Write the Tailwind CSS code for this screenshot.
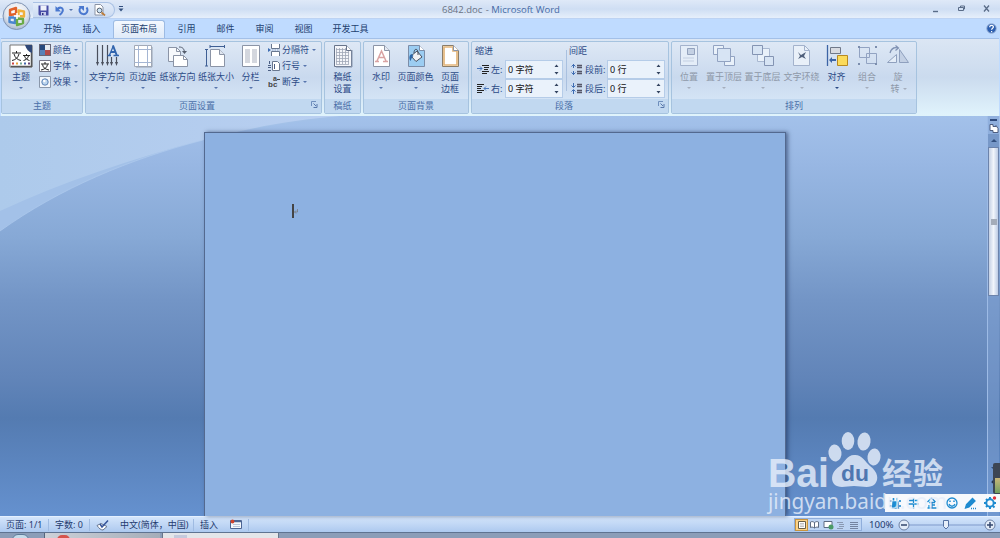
<!DOCTYPE html>
<html lang="zh-CN">
<head>
  <meta charset="UTF-8">
  <title>6842.doc - Microsoft Word</title>
  <script src="https://cdn.jsdelivr.net/npm/@tailwindcss/browser@4"></script>
</head>
<body class="w-[1000px] h-[538px] overflow-hidden relative flex flex-col bg-[#bfdbff] font-['Noto_Sans','Noto_Sans_CJK_SC',sans-serif] text-[9px] leading-[12px] text-[#2b4a86] whitespace-nowrap">

  <!-- 标题栏 -->
  <header class="h-[18px] shrink-0 flex items-center bg-linear-to-b from-[#dfe9f8] via-[#cfdef3] to-[#e6effb]">
    <div class="ml-[33px] w-[82px] h-[16px] mt-[2px] flex items-center border border-[#a9c1e4] border-l-0 rounded-r-full bg-linear-to-b from-[#e3ecf9] to-[#cbdbf2]">
      <svg class="ml-[5px] w-[11px] h-[11px]" viewBox="0 0 11 11"><path d="M.5.5h10v10h-9l-1-1z" fill="#474ca5"/><path d="M2.500.5h6v5h-6z" fill="#eef1fb"/><path d="M3 7h5v3.500H3z" fill="#c5cbe8"/><path d="M4 8h1.500v2H4z" fill="#2c3183"/></svg>
      <svg class="ml-[6px] w-[10px] h-[11px]" viewBox="0 0 10 11"><path d="M2 4.500C5 1 9 3 7.500 6.500 7 8 6 9 4.500 10" fill="none" stroke="#4a78cf" stroke-width="2"/><path d="M.5 1v5.500H6z" fill="#4a78cf"/></svg>
      <span class="ml-[4px] border-x-[2px] border-x-transparent border-t-[2px] border-t-[#5775ad]"></span>
      <svg class="ml-[5px] w-[11px] h-[11px]" viewBox="0 0 11 11"><path d="M8.500 2.500A4 4 0 1 1 3 2" fill="none" stroke="#4a78cf" stroke-width="2"/><path d="M.5 1H6v5z" fill="#4a78cf"/></svg>
      <svg class="ml-[5px] w-[12px] h-[12px]" viewBox="0 0 12 12"><path d="M1 .5h5.500L9 3v8H1z" fill="#fff" stroke="#8a93a5"/><circle cx="5.500" cy="6.500" r="2.400" fill="#cbe3f6" stroke="#56606f"/><path d="M7.500 8.500L11 11.500" stroke="#bb7c3b" stroke-width="1.700"/></svg>
    </div>
    <svg class="ml-[3px] w-[6px] h-[6px]" viewBox="0 0 6 6"><path d="M1 .5h4" stroke="#33507f"/><path d="M.5 2.500h5L3 5.500z" fill="#33507f"/></svg>
    <h1 class="ml-[318px] mt-[2px] w-[120px] font-['Open_Sans'] text-[9.500px] text-[#6a7283]">6842.doc <span class="ml-[1px]">-</span> <span class="text-[#456aa5]">Microsoft Word</span></h1>
    <svg class="ml-[370px] w-[60px] h-[10px]" viewBox="0 0 60 10" fill="none" stroke="#5a6c88"><path d="M1 7.500h5" stroke-width="1.400"/><path d="M26.500 3.500h5v3h-5zM28.500 3v-1h4V5h-1"/><path d="M52 1.500l5 6M57 1.500l-5 6" stroke-width="1.300"/></svg>
  </header>

  <!-- 选项卡 -->
  <nav class="h-[20px] shrink-0 pl-[33px] flex items-end text-center border-t border-[#bdd3f3] bg-[#bfdbff] text-[#22406f]">
    <a class="w-[39px] h-[18px] pt-[3px]">开始</a>
    <a class="w-[39px] h-[18px] pt-[3px]">插入</a>
    <a class="mx-[2px] w-[52px] h-[18px] pt-[2px] border border-b-0 border-[#9dbbe3] rounded-t-[3px] bg-linear-to-b from-[#f4f9ff] to-[#dfeaf8]">页面布局</a>
    <a class="w-[39px] h-[18px] pt-[3px]">引用</a>
    <a class="w-[39px] h-[18px] pt-[3px]">邮件</a>
    <a class="w-[39px] h-[18px] pt-[3px]">审阅</a>
    <a class="w-[39px] h-[18px] pt-[3px]">视图</a>
    <a class="w-[55px] h-[18px] pt-[3px]">开发工具</a>
    <svg class="ml-auto mr-[3px] mb-[4px] w-[11px] h-[11px]" viewBox="0 0 11 11"><circle cx="5.500" cy="5.500" r="4.800" fill="#2d5fb0" stroke="#9db5da"/><path d="M3.700 4.200c0-2.500 3.700-2.300 3.700-.2 0 1.200-1.800 1.300-1.800 2.700M5.600 8v1.200" fill="none" stroke="#fff" stroke-width="1.200"/></svg>
  </nav>

  <!-- 功能区 -->
  <section class="h-[78px] shrink-0 mx-[1px] pt-[2px] pb-[1px] flex border-t border-[#a3c0e8] border-b border-b-[#dff3fb] bg-linear-to-b from-[#dbe6f4] via-[#cbdbee] to-[#e0f3fc]">

    <!-- 主题 -->
    <div class="w-[82px] mr-[2px] flex flex-col border border-[#a6c3df] rounded-[2px] bg-linear-to-b from-[#dee8f5] via-[#c9d9ee] to-[#dbebfa]">
      <div class="h-[58px] flex">
        <div class="ml-[2px] w-[34px] flex flex-col items-center">
          <svg class="mt-[2px] w-[24px] h-[24px]" viewBox="0 0 24 24"><path d="M1 1h22v22H1z" fill="#fff" stroke="#777"/><path d="M2 22.500h21M22.500 2v21" stroke="#555" stroke-width="1.500"/><path d="M16 1h7v8c-3-1-6-4-7-8z" fill="#2f4777"/><path d="M3 9h9M7.500 7v2M5 10c1 4 4 6 7 6.500M10 10c-1 4-4 6-7 6.500M14 11.500h7M17.500 10v1.500M15.500 12c1 3 3 4 5 4.500M19.500 12c-1 3-3 4-5 4.500" fill="none" stroke="#222"/><path d="M3 19.500h2" stroke="#c44" stroke-width="2"/><path d="M7 19.500h2" stroke="#e8a33c" stroke-width="2"/><path d="M11 19.500h2" stroke="#7a9" stroke-width="2"/><path d="M15 19.500h2" stroke="#46a" stroke-width="2"/><path d="M19 19.500h2" stroke="#647" stroke-width="2"/></svg>
          <span class="mt-[3px]">主题</span>
          <span class="mt-[4px] border-x-[2px] border-x-transparent border-t-[2px] border-t-[#5775ad]"></span>
        </div>
        <div class="ml-[1px] pt-[2px] flex flex-col gap-[4px]">
          <div class="flex items-center gap-[2px]">
            <svg class="w-[12px] h-[12px]" viewBox="0 0 12 12"><path d="M0 0h12v12H0z" fill="#667"/><path d="M1 1h5v5H1z" fill="#27497d"/><path d="M6 1h5v5H6z" fill="#e6eaf0"/><path d="M1 6h5v5H1z" fill="#5781b9"/><path d="M6 6h5v5H6z" fill="#b14a4c"/></svg>
            颜色 <span class="ml-[1px] border-x-[2px] border-x-transparent border-t-[2px] border-t-[#5775ad]"></span>
          </div>
          <div class="flex items-center gap-[2px]">
            <svg class="w-[12px] h-[12px]" viewBox="0 0 12 12"><path d="M.5.5h11v11H.5z" fill="#fff" stroke="#778"/><path d="M2 4h8M6 2v2M3.500 4.500C4 8 7 9.500 10 10M8.500 4.500C8 8 5 9.500 2 10" fill="none" stroke="#222"/></svg>
            字体 <span class="ml-[1px] border-x-[2px] border-x-transparent border-t-[2px] border-t-[#5775ad]"></span>
          </div>
          <div class="flex items-center gap-[2px]">
            <svg class="w-[12px] h-[12px]" viewBox="0 0 12 12"><path d="M.5.5h11v11H.5z" fill="#f4f7fb" stroke="#8a97aa"/><circle cx="6" cy="6" r="3.200" fill="#bdd6ee" stroke="#5d82b5"/><circle cx="5.300" cy="5" r="1.200" fill="#fff"/></svg>
            效果 <span class="ml-[1px] border-x-[2px] border-x-transparent border-t-[2px] border-t-[#5775ad]"></span>
          </div>
        </div>
      </div>
      <div class="flex-1 text-center leading-[14px] bg-[#c1d8f0] text-[#4a6fa8]">主题</div>
    </div>

    <!-- 页面设置 -->
    <div class="w-[237px] mr-[2px] flex flex-col border border-[#a6c3df] rounded-[2px] bg-linear-to-b from-[#dee8f5] via-[#c9d9ee] to-[#dbebfa]">
      <div class="h-[58px] flex">
        <div class="ml-[2px] w-[38px] flex flex-col items-center">
          <svg class="mt-[2px] w-[24px] h-[24px]" viewBox="0 0 24 24"><path d="M2.500 1v18M7.500 1v18M12.500 1v18M16.500 13v6M21.500 13v6" stroke="#4a4f5c" stroke-width="1.200"/><path d="M1 18h3l-1.500 4zM6 18h3l-1.500 4zM11 18h3l-1.500 4zM15 18h3l-1.500 4zM20 18h3l-1.500 4z" fill="#4a4f5c"/><path d="M12.500 11.500h3.500M18.500 11.500h5.500M14.500 11L18.500 1.500" fill="none" stroke="#3265ad" stroke-width="1.300"/><path d="M18 1.500L21.800 11.500M16 8h4.500" fill="none" stroke="#3265ad" stroke-width="2"/></svg>
          <span class="mt-[3px]">文字方向</span>
          <span class="mt-[4px] border-x-[2px] border-x-transparent border-t-[2px] border-t-[#5775ad]"></span>
        </div>
        <div class="w-[33px] flex flex-col items-center">
          <svg class="mt-[2px] w-[24px] h-[24px]" viewBox="0 0 24 24"><path d="M3.500 1.500h17v21h-17z" fill="#fff" stroke="#a2a9b6"/><path d="M7.500 1.500v21M16.500 1.500v21M3.500 5.500h17M3.500 18.500h17" stroke="#a5b6d3"/><path d="M21 3v20H5" fill="none" stroke="#9aa3b2"/></svg>
          <span class="mt-[3px]">页边距</span>
          <span class="mt-[4px] border-x-[2px] border-x-transparent border-t-[2px] border-t-[#5775ad]"></span>
        </div>
        <div class="w-[37px] flex flex-col items-center">
          <svg class="mt-[2px] w-[24px] h-[24px]" viewBox="0 0 24 24"><path d="M2.500 3.500h8l4 4v10h-12z" fill="#f7f9fc" stroke="#8b94a6"/><path d="M7.500 11.500h10l4 4v7h-14z" fill="#fff" stroke="#8b94a6"/><path d="M10.500 3.500v4h4M17.500 11.500v4h4" fill="none" stroke="#8b94a6"/><path d="M13 3c4 0 5 2 5.500 5" fill="none" stroke="#555d6d"/><path d="M16 7h5L18.500 10z" fill="#555d6d"/></svg>
          <span class="mt-[3px]">纸张方向</span>
          <span class="mt-[4px] border-x-[2px] border-x-transparent border-t-[2px] border-t-[#5775ad]"></span>
        </div>
        <div class="w-[40px] flex flex-col items-center">
          <svg class="mt-[2px] w-[24px] h-[24px]" viewBox="0 0 24 24"><path d="M6.500 5.500h9l5 5v12h-14z" fill="#fff" stroke="#8b94a6"/><path d="M15.500 5.500v5h5" fill="#dfe5ef" stroke="#8b94a6"/><path d="M6 2.500h14M6 1v3M20.500 1v3M2.500 5v17M1 5.500h3M1 22h3" stroke="#3f5f94"/></svg>
          <span class="mt-[3px]">纸张大小</span>
          <span class="mt-[4px] border-x-[2px] border-x-transparent border-t-[2px] border-t-[#5775ad]"></span>
        </div>
        <div class="w-[29px] flex flex-col items-center">
          <svg class="mt-[2px] w-[24px] h-[24px]" viewBox="0 0 24 24"><path d="M3.500 1.500h17v21h-17z" fill="#fff" stroke="#8b94a6"/><path d="M6 6h5M6 8h5M6 10h5M6 12h5M6 14h5M6 16h5M6 18h5M13 6h5M13 8h5M13 10h5M13 12h5M13 14h5M13 16h5M13 18h5" stroke="#a9b0bd" stroke-width="1.200"/></svg>
          <span class="mt-[3px]">分栏</span>
          <span class="mt-[4px] border-x-[2px] border-x-transparent border-t-[2px] border-t-[#5775ad]"></span>
        </div>
        <div class="ml-[3px] pt-[2px] flex flex-col gap-[4px]">
          <div class="flex items-center gap-[2px]">
            <svg class="w-[12px] h-[12px]" viewBox="0 0 12 12"><path d="M3.500 0v4.500h8V0M3.500 12V7.500h8V12" fill="#fff" stroke="#68778f"/><path d="M4 6h8" stroke="#8ca2c5" stroke-dasharray="1.500 1"/><path d="M0 4l3 2-3 2z" fill="#3f6db3"/></svg>
            分隔符 <span class="ml-[1px] border-x-[2px] border-x-transparent border-t-[2px] border-t-[#5775ad]"></span>
          </div>
          <div class="flex items-center gap-[2px]">
            <svg class="w-[12px] h-[12px]" viewBox="0 0 12 12"><path d="M4.500 1.500h5l2 2v7h-7z" fill="#fff" stroke="#68778f"/><path d="M1.500 1v3M0 5.500h3M0 7.500h3M0 10.500h3M6.500 4v5" stroke="#4a5e83"/></svg>
            行号 <span class="ml-[1px] border-x-[2px] border-x-transparent border-t-[2px] border-t-[#5775ad]"></span>
          </div>
          <div class="flex items-center gap-[2px]">
            <svg class="w-[12px] h-[12px]" viewBox="0 0 12 12"><g fill="#444" font-family="Liberation Sans" font-weight="bold"><text x="0" y="11" font-size="8">bc</text><text x="5" y="5" font-size="7">a</text></g><path d="M9 3.500h3" stroke="#444"/></svg>
            断字 <span class="ml-[1px] border-x-[2px] border-x-transparent border-t-[2px] border-t-[#5775ad]"></span>
          </div>
        </div>
      </div>
      <div class="flex-1 flex leading-[14px] bg-[#c1d8f0] text-[#4a6fa8]">
        <span class="ml-[93px]">页面设置</span>
        <svg class="ml-auto mr-[3px] mt-[2px] w-[7px] h-[7px]" viewBox="0 0 7 7"><path d="M.5 5V.5H5" fill="none" stroke="#6f8fbd"/><path d="M2.500 2.500L5 5M6 3v3.500H2.500" fill="none" stroke="#5878ab"/></svg>
      </div>
    </div>

    <!-- 稿纸 -->
    <div class="w-[37px] mr-[2px] flex flex-col border border-[#a6c3df] rounded-[2px] bg-linear-to-b from-[#dee8f5] via-[#c9d9ee] to-[#dbebfa]">
      <div class="h-[58px] flex flex-col items-center">
        <svg class="mt-[2px] w-[24px] h-[24px]" viewBox="0 0 24 24"><path d="M3.500 1.500h12l5 5v16h-17z" fill="#f5f6fa" stroke="#68748a"/><path d="M21 6v17H5" fill="none" stroke="#8593ab"/><path d="M5.500 4v16M8.500 4v16M11.500 4v16M14.500 4v16M17.500 7v13M5 5.500h10M5 8.500h13M5 11.500h13M5 14.500h13M5 17.500h13M5 20.500h13" stroke="#a0a7b6" stroke-width=".8"/><path d="M15.500 1.500v5h5" fill="#fff" stroke="#68748a"/></svg>
        <span class="mt-[3px]">稿纸</span>
        <span>设置</span>
      </div>
      <div class="flex-1 text-center leading-[14px] bg-[#c1d8f0] text-[#4a6fa8]">稿纸</div>
    </div>

    <!-- 页面背景 -->
    <div class="w-[106px] mr-[2px] flex flex-col border border-[#a6c3df] rounded-[2px] bg-linear-to-b from-[#dee8f5] via-[#c9d9ee] to-[#dbebfa]">
      <div class="h-[58px] flex">
        <div class="ml-[1px] w-[32px] flex flex-col items-center">
          <svg class="mt-[2px] w-[24px] h-[24px]" viewBox="0 0 24 24"><path d="M4.500 1.500h11l5 5v16h-16z" fill="#fff" stroke="#8b94a6"/><path d="M15.500 1.500v5h5" fill="#e5e9f2" stroke="#8b94a6"/><path d="M6 17.500h4M14 17.500h5M8 17L12.500 7 17 17M9.500 13.500h6" fill="none" stroke="#d9a3a3" stroke-width="1.500"/></svg>
          <span class="mt-[3px]">水印</span>
          <span class="mt-[4px] border-x-[2px] border-x-transparent border-t-[2px] border-t-[#5775ad]"></span>
        </div>
        <div class="w-[37px] flex flex-col items-center">
          <svg class="mt-[2px] w-[24px] h-[24px]" viewBox="0 0 24 24"><path d="M4.500 1.500h11l5 5v16h-16z" fill="#9ccdf2" stroke="#7c8da8"/><path d="M15.500 1.500v5h5" fill="#fff" stroke="#7c8da8"/><path d="M7 12l6-5 5 6-6 4.500z" fill="#f0f2f5" stroke="#454f60"/><path d="M10 9c0-5 4-5 4 0v2" fill="none" stroke="#454f60"/><path d="M7.500 10c-2 1-3 4-1 7 1-2 1-4 3-5z" fill="#2b66a8"/></svg>
          <span class="mt-[3px]">页面颜色</span>
          <span class="mt-[4px] border-x-[2px] border-x-transparent border-t-[2px] border-t-[#5775ad]"></span>
        </div>
        <div class="w-[32px] flex flex-col items-center">
          <svg class="mt-[2px] w-[24px] h-[24px]" viewBox="0 0 24 24"><path d="M4.500 1.500h11l5 5v16h-16z" fill="#fff" stroke="#8b7d68"/><path d="M6 3h9v4h4v14H6z" fill="none" stroke="#e3b579" stroke-width="1.700"/><path d="M15.500 1.500v5h5" fill="#fff" stroke="#8b94a6"/></svg>
          <span class="mt-[3px]">页面</span>
          <span>边框</span>
        </div>
      </div>
      <div class="flex-1 text-center leading-[14px] bg-[#c1d8f0] text-[#4a6fa8]">页面背景</div>
    </div>

    <!-- 段落 -->
    <div class="w-[198px] mr-[2px] flex flex-col border border-[#a6c3df] rounded-[2px] bg-linear-to-b from-[#dee8f5] via-[#c9d9ee] to-[#dbebfa]">
      <div class="h-[58px] flex">
        <div class="ml-[3px] w-[91px] pt-[3px] flex flex-col">
          <span>缩进</span>
          <div class="mt-[3px] h-[19px] flex items-center">
            <svg class="ml-[2px] w-[12px] h-[11px]" viewBox="0 0 12 11"><path d="M5 1.500h7M7 3.500h5M7 5.500h4M5 7.500h7M5 9.500h5" stroke="#222"/><path d="M0 4.500h5M3 2.500l2 2-2 2" fill="none" stroke="#4a78bd"/></svg>
            <span class="ml-[2px] w-[14px]">左:</span>
            <div class="w-[58px] h-[19px] pl-[2px] pr-[3px] flex items-center justify-between border border-[#b5cce8] bg-[#eaf2fb] text-[#111]">0 字符
              <svg class="w-[5px] h-[11px]" viewBox="0 0 5 11"><path d="M.5 3h4l-2-2.500zM.5 8h4l-2 2.500z" fill="#33435f"/></svg>
            </div>
          </div>
          <div class="h-[19px] flex items-center">
            <svg class="ml-[2px] w-[12px] h-[11px]" viewBox="0 0 12 11"><path d="M0 1.500h7M0 3.500h5M0 5.500h4M0 7.500h7M0 9.500h5" stroke="#222"/><path d="M12 5.500H7M9 3.500l-2 2 2 2" fill="none" stroke="#4a78bd"/></svg>
            <span class="ml-[2px] w-[14px]">右:</span>
            <div class="w-[58px] h-[19px] pl-[2px] pr-[3px] flex items-center justify-between border border-[#b5cce8] bg-[#eaf2fb] text-[#111]">0 字符
              <svg class="w-[5px] h-[11px]" viewBox="0 0 5 11"><path d="M.5 3h4l-2-2.500zM.5 8h4l-2 2.500z" fill="#33435f"/></svg>
            </div>
          </div>
        </div>
        <div class="mt-[8px] h-[41px] border-l border-[#a9c0df]"></div>
        <div class="ml-[1px] w-[98px] pt-[3px] flex flex-col">
          <span class="ml-[1px]">间距</span>
          <div class="mt-[3px] h-[19px] flex items-center">
            <svg class="ml-[3px] w-[12px] h-[11px]" viewBox="0 0 12 11"><path d="M6 1.500h5M6 3.500h5M6 7.500h5M6 9.500h5" stroke="#556" stroke-width="1.500"/><path d="M2.500 0v4M2.500 7v4M.5 2.500l2-2 2 2M.5 8.500l2 2 2-2" fill="none" stroke="#3f6db3"/></svg>
            <span class="ml-[2px] w-[22px]">段前:</span>
            <div class="w-[58px] h-[19px] px-[2px] flex items-center justify-between border border-[#b5cce8] bg-[#eaf2fb] text-[#111]">0 行
              <svg class="mr-[1px] w-[5px] h-[11px]" viewBox="0 0 5 11"><path d="M.5 3h4l-2-2.500zM.5 8h4l-2 2.500z" fill="#33435f"/></svg>
            </div>
          </div>
          <div class="h-[19px] flex items-center">
            <svg class="ml-[3px] w-[12px] h-[11px]" viewBox="0 0 12 11"><path d="M6 1.500h5M6 3.500h5M6 7.500h5M6 9.500h5" stroke="#556" stroke-width="1.500"/><path d="M2.500 0v4M2.500 7v4M.5 2.500l2 2 2-2M.5 8.500l2-2 2 2" fill="none" stroke="#3f6db3"/></svg>
            <span class="ml-[2px] w-[22px]">段后:</span>
            <div class="w-[58px] h-[19px] px-[2px] flex items-center justify-between border border-[#b5cce8] bg-[#eaf2fb] text-[#111]">0 行
              <svg class="mr-[1px] w-[5px] h-[11px]" viewBox="0 0 5 11"><path d="M.5 3h4l-2-2.500zM.5 8h4l-2 2.500z" fill="#33435f"/></svg>
            </div>
          </div>
        </div>
      </div>
      <div class="flex-1 flex leading-[14px] bg-[#c1d8f0] text-[#4a6fa8]">
        <span class="ml-[83px]">段落</span>
        <svg class="ml-auto mr-[3px] mt-[2px] w-[7px] h-[7px]" viewBox="0 0 7 7"><path d="M.5 5V.5H5" fill="none" stroke="#6f8fbd"/><path d="M2.500 2.500L5 5M6 3v3.500H2.500" fill="none" stroke="#5878ab"/></svg>
      </div>
    </div>

    <!-- 排列 -->
    <div class="w-[246px] flex flex-col border border-[#a6c3df] rounded-[2px] bg-linear-to-b from-[#dee8f5] via-[#c9d9ee] to-[#dbebfa]">
      <div class="h-[58px] flex text-[#8e98a8]">
        <div class="w-[34px] flex flex-col items-center">
          <svg class="mt-[2px] w-[24px] h-[24px]" viewBox="0 0 24 24"><path d="M3.500 1.500h17v20h-17z" fill="#e4edf8" stroke="#a3b2cc"/><path d="M10.500 4.500h7v6h-7z" fill="#c4d1e4" stroke="#93a2bd"/><path d="M11 10l3-3 3 3M6 14h11M6 17h11" fill="none" stroke="#c3cfe2"/></svg>
          <span class="mt-[3px]">位置</span>
          <span class="mt-[4px] border-x-[2px] border-x-transparent border-t-[2px] border-t-[#a5aebd]"></span>
        </div>
        <div class="w-[36px] flex flex-col items-center">
          <svg class="mt-[2px] w-[24px] h-[24px]" viewBox="0 0 24 24"><path d="M1.500 1.500h10v9h-10zM12.500 12.500h10v9h-10z" fill="#e9f1fa" stroke="#92a3c2"/><path d="M5.500 4.500h13v13h-13z" fill="#d7e4f4" stroke="#92a3c2"/></svg>
          <span class="mt-[3px]">置于顶层</span>
          <span class="mt-[4px] border-x-[2px] border-x-transparent border-t-[2px] border-t-[#a5aebd]"></span>
        </div>
        <div class="w-[41px] flex flex-col items-center">
          <svg class="mt-[2px] w-[24px] h-[24px]" viewBox="0 0 24 24"><path d="M6.500 4.500h12v13h-12z" fill="#e9f1fa" stroke="#a9b8d1"/><path d="M1.500 1.500h10v9h-10zM13.500 12.500h9v9h-9z" fill="#d7e4f4" stroke="#8494b3"/></svg>
          <span class="mt-[3px]">置于底层</span>
          <span class="mt-[4px] border-x-[2px] border-x-transparent border-t-[2px] border-t-[#a5aebd]"></span>
        </div>
        <div class="w-[37px] flex flex-col items-center">
          <svg class="mt-[2px] w-[24px] h-[24px]" viewBox="0 0 24 24"><path d="M3.500 1.500h11l5 5v15h-16z" fill="#e9f0f9" stroke="#a3b2cc"/><path d="M14.500 1.500v5h5" fill="none" stroke="#a3b2cc"/><path d="M8 8l3 3 5-3-2 4 2 3-4-2-4 2 2-3z" fill="#50607c"/></svg>
          <span class="mt-[3px]">文字环绕</span>
          <span class="mt-[4px] border-x-[2px] border-x-transparent border-t-[2px] border-t-[#a5aebd]"></span>
        </div>
        <div class="w-[33px] flex flex-col items-center text-[#2b4a86]">
          <svg class="mt-[2px] w-[24px] h-[24px]" viewBox="0 0 24 24"><path d="M2.500 1v21" stroke="#3c64a5" stroke-width="1.300"/><path d="M5.500 3.500h10v6h-10z" fill="#d8dbe2" stroke="#707889"/><path d="M12.500 11.500h10v10h-10z" fill="#fbdb5b" stroke="#b78a22"/><path d="M4 16l3-3v2h4v2H7v2z" fill="#3c64a5"/></svg>
          <span class="mt-[3px]">对齐</span>
          <span class="mt-[4px] border-x-[2px] border-x-transparent border-t-[2px] border-t-[#2b4a86]"></span>
        </div>
        <div class="w-[28px] flex flex-col items-center">
          <svg class="mt-[2px] w-[24px] h-[24px]" viewBox="0 0 24 24"><path d="M4.500 3.500h10v10h-10zM11.500 9.500h10v10h-10z" fill="none" stroke="#92a3c2"/><path d="M3 2h2v2H3zM20 2h2v2h-2zM3 19h2v2H3zM20 19h2v2h-2z" fill="#7b8dad"/></svg>
          <span class="mt-[3px]">组合</span>
          <span class="mt-[4px] border-x-[2px] border-x-transparent border-t-[2px] border-t-[#a5aebd]"></span>
        </div>
        <div class="w-[34px] flex flex-col items-center">
          <svg class="mt-[2px] w-[24px] h-[24px]" viewBox="0 0 24 24"><path d="M1.500 18.500h9v-8z" fill="#e4edf8" stroke="#8fa0be"/><path d="M13.500 5.500v13h9z" fill="#c3d0e4" stroke="#8fa0be"/><path d="M4 9c1-4 4-6 8-5M9.500 1.500l3 2.500-3 2.500" fill="none" stroke="#7f91b3" stroke-width="1.200"/></svg>
          <span class="mt-[3px]">旋</span>
          <span class="mr-[6px] flex items-center gap-[3px]">转<span class="mr-[-7px] border-x-[2px] border-x-transparent border-t-[2px] border-t-[#a5aebd]"></span></span>
        </div>
      </div>
      <div class="flex-1 text-center leading-[14px] bg-[#c1d8f0] text-[#4a6fa8]">排列</div>
    </div>
  </section>

  <!-- 文档区 -->
  <main class="h-[400px] shrink-0 relative flex">
    <svg class="absolute inset-0 w-[1000px] h-[400px]" viewBox="0 0 1000 400">
      <defs>
        <linearGradient id="sky" x1="0" y1="0" x2="0" y2="1">
          <stop offset="0" stop-color="#a3c1ea"/><stop offset=".12" stop-color="#98b7e3"/><stop offset=".3" stop-color="#87a9d6"/><stop offset=".46" stop-color="#7395c6"/><stop offset=".65" stop-color="#6285b9"/><stop offset=".755" stop-color="#547bb1"/><stop offset="1" stop-color="#6591cf"/>
        </linearGradient>
        <linearGradient id="glow" x1="0" y1="0" x2="1" y2="0">
          <stop offset="0" stop-color="#adcaeb"/><stop offset="1" stop-color="#b9cff1"/>
        </linearGradient>
      </defs>
      <path d="M0 0h1000v400H0z" fill="url(#sky)"/>
      <path d="M0 115C60 72 130 43 203 24 250 12 290 6 330 3V0H0z" fill="#a3c1e8"/>
      <path d="M0 95C60 67 130 43 203 24 250 12 290 4 340 0H0z" fill="url(#glow)"/>
      <path d="M0 115C60 72 130 43 203 24" fill="none" stroke="#b0cbee" stroke-width=".7"/>
    </svg>
    <!-- 页面 -->
    <div class="relative ml-[204px] mt-[16px] w-[582px] border border-b-0 border-[#53698f] bg-[#8db1e1] shadow-[2px_0_4px_rgba(30,50,90,0.6)]">
      <div class="ml-[87px] mt-[71px] flex items-center">
        <span class="w-[2px] h-[14px] bg-[#444]"></span>
        <svg class="w-[4px] h-[5px]" viewBox="0 0 4 5"><path d="M3.500 0v3H.5M2 1.500L.5 3 2 4.500" fill="none" stroke="#777" stroke-width=".7"/></svg>
      </div>
    </div>
    <!-- 滚动条 -->
    <div class="relative ml-auto mr-[1px] w-[12px] flex flex-col items-center border-l border-[#9dbbe6] bg-[#7d9fd2]/50">
      <span class="mt-[3px] w-[7px] h-[2px] bg-[#2f4a7c]"></span>
      <svg class="mt-[2px] w-[10px] h-[11px]" viewBox="0 0 10 11"><path d="M1 1.500h3v2h3v-1l2 3v4H4v-2H1z" fill="#fff" stroke="#4f5f80"/></svg>
      <div class="w-full h-[13px] flex justify-center items-center bg-[#7798c8]"><span class="border-x-[3px] border-x-transparent border-b-[3px] border-b-[#33507f]"></span></div>
      <div class="w-[11px] h-[149px] flex items-center justify-center border border-[#6c83ab] bg-linear-to-r from-[#c4d0e4] via-[#f1f5fb] to-[#bccbe4]"><span class="w-[6px] h-[6px] bg-[#a4acb9]"></span></div>
      <span class="mt-[171px] border-x-[3px] border-x-transparent border-t-[3px] border-t-[#33507f]"></span>
      <span class="mt-[10px] w-[4px] h-[4px] border-t-2 border-l-2 border-[#223354] rotate-45"></span>
    </div>
  </main>

  <!-- 状态栏 -->
  <footer class="h-[16px] shrink-0 flex items-center border-t border-[#e4f0ff] bg-linear-to-b from-[#d4e5fb] to-[#adc9ef] text-[#1f3a6e]">
    <span class="w-[49px] h-[12px] pl-[6px] border-r border-[#9fbbe2]">页面: 1/1</span>
    <span class="w-[41px] h-[12px] pl-[6px] border-r border-[#9fbbe2]">字数: 0</span>
    <svg class="ml-[6px] w-[13px] h-[12px]" viewBox="0 0 13 12"><path d="M1 6.500l4-2 6 3-4 3.500c-2 0-4-1.500-6-4.500z" fill="#fff" stroke="#65748f"/><path d="M4 5l2 3 6-6.500" fill="none" stroke="#35549a" stroke-width="1.500"/></svg>
    <span class="ml-[5px] w-[80px] h-[12px] pl-[6px] border-r border-[#9fbbe2]">中文(简体，中国)</span>
    <span class="ml-[6px]">插入</span>
    <svg class="ml-[12px] w-[12px] h-[11px]" viewBox="0 0 12 11"><path d="M.5 1.500h11v8H.5z" fill="#f4f7fb" stroke="#4c6493"/><path d="M1 2.500h10" stroke="#4c6493" stroke-width="1.500"/><path d="M3 5.500h7M3 7.500h7" stroke="#b9c5d9"/><circle cx="2.500" cy="2.500" r="1.900" fill="#d0452e"/></svg>
    <span class="ml-[6px] h-[12px] border-r border-[#9fbbe2]"></span>
    <div class="ml-auto h-[13px] mr-[7px] flex items-center border border-[#90aedb] bg-[#bdd4f3]">
      <span class="w-[13px] h-[12px] flex items-center justify-center border border-[#c8943e] bg-[#fcd389]"><svg class="w-[8px] h-[8px]" viewBox="0 0 8 8"><path d="M.5.5h7v7h-7z" fill="#fff" stroke="#6b6047"/><path d="M2 2.500h4M2 4h4M2 5.500h4" stroke="#999" stroke-width=".6"/></svg></span>
      <svg class="w-[53px] h-[10px]" viewBox="0 0 53 10"><path d="M2.500 2c2-1 3 0 4 .5 1-.5 2-1.500 4-.5v5.500c-2-1-3 0-4 .5-1-.5-2-1.500-4-.5zM6.500 2.500V8" fill="#fff" stroke="#5d6b82"/><path d="M16 1.500h8v6h-8z" fill="#fff" stroke="#5d6b82"/><circle cx="23" cy="7" r="2.500" fill="#4a9a66"/><path d="M29 2.500h6M31 4.500h5M31 6.500h5M29 8.500h6" stroke="#8a99b2"/><path d="M42 2.500h8M42 4.500h8M42 6.500h8M42 8.500h8" stroke="#7383a0"/></svg>
    </div>
    <span class="w-[25px] text-[9.700px]">100%</span>
    <svg class="ml-[4px] mr-[2px] w-[100px] h-[14px]" viewBox="0 0 100 14"><path d="M11 7h76" stroke="#7e9acb"/><path d="M45.500 2.500h5v6L48 11l-2.500-2.500z" fill="#e6eef9" stroke="#5672a3"/><circle cx="6" cy="7" r="5" fill="#e3ecf8" stroke="#6c80a3"/><path d="M3 7h6" stroke="#33476d" stroke-width="1.500"/><circle cx="92" cy="7" r="5" fill="#e3ecf8" stroke="#6c80a3"/><path d="M89 7h6M92 4v6" stroke="#33476d" stroke-width="1.500"/></svg>
  </footer>

  <!-- 任务栏 -->
  <div class="h-[6px] shrink-0 flex overflow-hidden border-t border-[#5f7391] bg-[#8b9db8]">
    <div class="w-[44px] flex justify-center"><span class="mt-[1px] ml-[-4px] w-[17px] h-[12px] shrink-0 rounded-full bg-[#c5dbea] border border-[#5d7a98]"></span></div>
    <div class="w-[116px] pl-[12px] border-l border-[#56657c] bg-linear-to-r from-[#cdd1d8] to-[#a5adb9]"><span class="mt-[2px] block w-[13px] h-[10px] rounded-full bg-[#d5544d]"></span></div>
    <div class="ml-[2px] w-[117px] pl-[11px] border-x border-[#68758a] bg-[#e3e5e9]"><span class="mt-[2px] block w-[13px] h-[6px] bg-[#c5c9dc]"></span></div>
  </div>

  <!-- Office 按钮 -->
  <svg class="absolute left-[1px] top-0 w-[34px] h-[32px]" viewBox="0 0 34 32">
    <defs>
      <radialGradient id="orb" cx=".5" cy=".35" r=".65">
        <stop offset="0" stop-color="#ffffff"/><stop offset=".6" stop-color="#e3e8f0"/><stop offset="1" stop-color="#a9b8cf"/>
      </radialGradient>
    </defs>
    <circle cx="15.500" cy="16" r="13.500" fill="url(#orb)" stroke="#7f93b3"/>
    <g fill="none" stroke-width="2.400" stroke-linejoin="round">
      <path d="M9 10l6-2v6l-6 1z" stroke="#e0622c"/>
      <path d="M17.500 10.500l5.500 1v5l-5.500-.5z" stroke="#f0b03a"/>
      <path d="M8.500 17.500l5.500 0v5.500l-5.500-1z" stroke="#4a86cf"/>
      <path d="M16 18.500l6 .5v4l-6 2z" stroke="#6aab45"/>
    </g>
    <path d="M13 16h6M16 13v6" stroke="#fff" stroke-width="1.500"/>
  </svg>

  <!-- 输入法工具条 -->
  <div class="absolute left-[885px] top-[494px] w-[115px] h-[18px] flex items-center bg-white/95">
    <svg class="w-[115px] h-[18px]" viewBox="0 0 115 18" fill="none" stroke="#1f8bd0" stroke-width="1.300">
      <path d="M8 8h5l.5 6h-6z" fill="#1f8bd0"/>
      <path d="M8.500 4v2.500M12 4v2.500M5.500 6v2M15 6v2M5.500 11v2M15 11v2" stroke-width="1.600"/>
      <path d="M28.500 4v11M24 6.500h9M23.500 10h10" stroke-dasharray="5 .8"/>
      <path d="M46.500 4l-4 4M46.500 4l4 4M44 8.500h6M47 9v5M42.500 14h9M47 11h3M44 11v3"/>
      <circle cx="67" cy="9" r="5"/><path d="M64 10c1 3 5 3 6 0"/><path d="M65 6.500v1.500M69 6.500v1.500" stroke-width="1.500"/>
      <path d="M80.500 14l1-3.500 6-6 2.500 2.500-6 6z" fill="#1f8bd0"/><path d="M86 14.500h5" stroke-dasharray="1 1"/>
      <circle cx="105" cy="9" r="3.700" stroke-width="2"/><path d="M105 3v2M105 13v2M99 9h2M109 9h2M101 5l1.500 1.500M108 12l1.500 1.500M101 13l1.500-1.500" stroke-width="2"/>
      <circle cx="109.500" cy="4" r="1.700" fill="#e0313c" stroke="none"/>
    </svg>
  </div>

  <!-- 水印 -->
  <svg class="absolute left-[760px] top-[425px] w-[200px] h-[95px]" viewBox="0 0 200 95" fill="#e6eefa" fill-opacity=".82">
    <text x="8" y="62" font-family="Liberation Sans" font-weight="bold" font-size="40" textLength="61" lengthAdjust="spacingAndGlyphs">Bai</text>
    <ellipse cx="75" cy="28" rx="6.500" ry="8.500" transform="rotate(-8 75 28)"/>
    <ellipse cx="88" cy="16" rx="6.300" ry="9"/>
    <ellipse cx="104" cy="16.500" rx="6.500" ry="9" transform="rotate(8 104 16.500)"/>
    <ellipse cx="114" cy="32" rx="6.500" ry="8.500" transform="rotate(8 114 32)"/>
    <path d="M94 30C101 29 105 36 110 41 118 47 119 54 115 59 110 64 102 61 94 61S79 64 74 59C70 54 72 46 80 41 85 37 87 30 94 30z"/>
    <text x="81" y="56" font-family="Liberation Sans" font-weight="bold" font-size="22" textLength="28" lengthAdjust="spacingAndGlyphs" fill="#4f77b1" fill-opacity="1">du</text>
    <text x="122" y="59" font-family="Noto Sans CJK SC" font-weight="bold" font-size="30" textLength="61">经验</text>
    <text x="8" y="84" font-family="Noto Sans" font-size="21.500" textLength="179" lengthAdjust="spacingAndGlyphs">jingyan.baidu.com</text>
  </svg>

  <!-- 边缘小部件 -->
  <div class="absolute left-[993px] top-[463px] w-[7px] h-[31px] flex flex-col rounded-l-[2px] bg-[#3d4654]">
    <span class="mt-[15px] ml-[2px] h-[15px] bg-linear-to-b from-[#c9b77a] to-[#6f9d62]"></span>
  </div>
</body>
</html>
